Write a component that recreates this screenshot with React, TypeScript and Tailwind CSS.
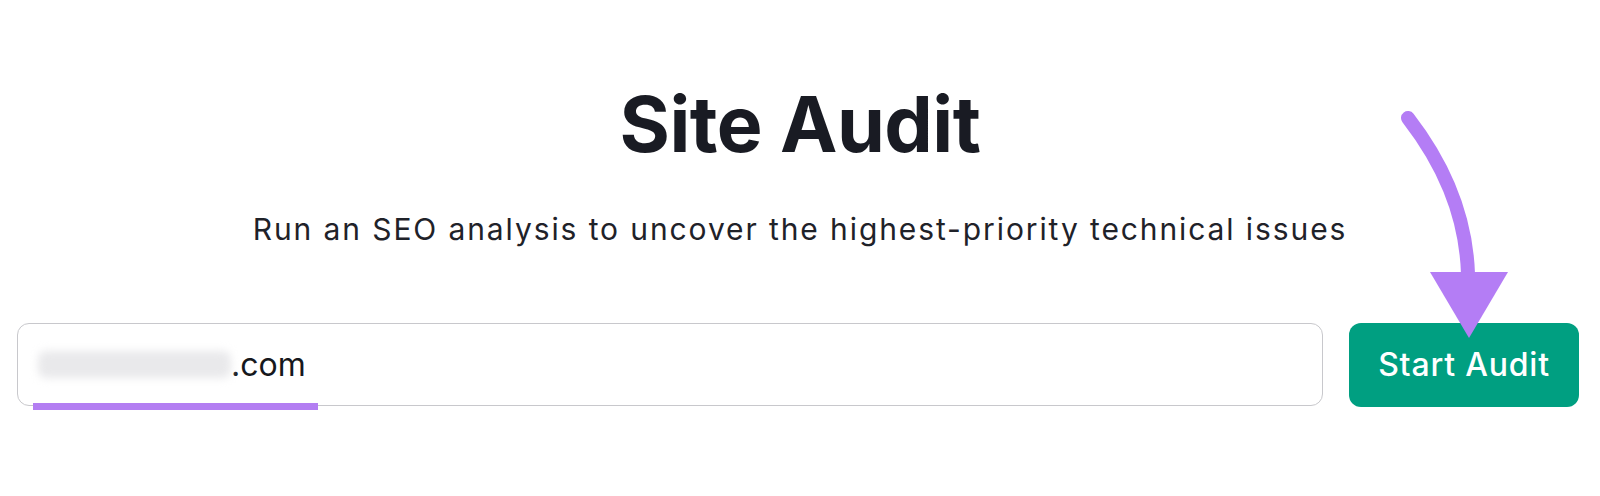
export default function App() {
  return (
    <div
      className="relative h-[496px] w-[1600px] overflow-hidden bg-white"
      style={{ fontFamily: 'Inter, "Noto Sans", sans-serif' }}
    >
      <div className="flex flex-col items-center pt-[86px]">
        <h1 className="text-[77px] font-bold leading-none tracking-[-0.5px] text-[#191b23]">
          Site Audit
        </h1>
        <p className="mt-[51px] text-[30px] leading-none tracking-[1.9px] text-[#1f2229]">
          Run an SEO analysis to uncover the highest-priority technical issues
        </p>
      </div>

      <div className="mt-[79px] flex gap-[26px] pl-[17px] pr-[21px]">
        <div className="relative flex h-[83px] flex-1 items-center rounded-[12px] border-[1.5px] border-[#c8c8cc] pl-[20px]">
          <span className="h-[27px] w-[193px] rounded-[8px] bg-[#e9e9eb] blur-[4px]" />
          <span className="text-[32px] leading-none text-[#16181d]">.com</span>
          {/* annotation underline */}
          <span className="absolute left-[15px] top-[79px] h-[7px] w-[285px] bg-[#b37ef2]" />
        </div>
        <button className="flex h-[84px] w-[230px] items-center justify-center rounded-[12px] bg-[#009f81] text-[32px] font-medium tracking-[0.8px] text-white">
          Start Audit
        </button>
      </div>

      <svg
        className="pointer-events-none absolute left-0 top-0"
        width="1600"
        height="496"
        viewBox="0 0 1600 496"
      >
        <path
          d="M1408 118 C1442 162 1466 212 1468 274"
          fill="none"
          stroke="#b47df5"
          strokeWidth="14"
          strokeLinecap="round"
        />
        <polygon points="1430,272 1508,272 1469,338" fill="#b47df5" />
      </svg>
    </div>
  );
}
